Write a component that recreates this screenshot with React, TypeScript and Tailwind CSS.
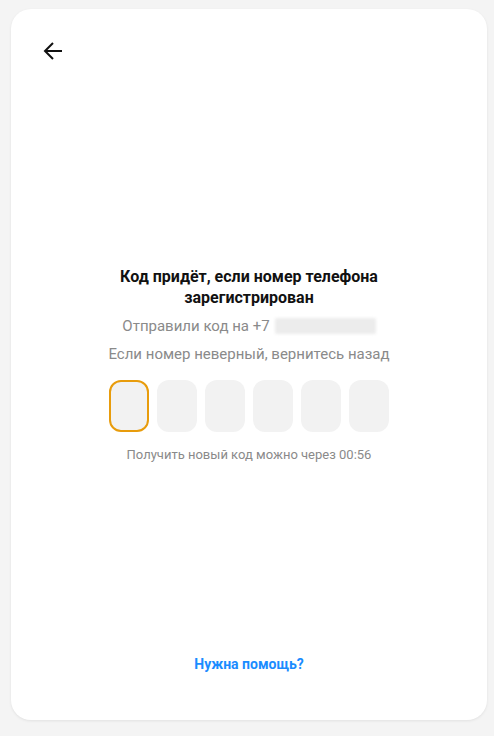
import React from 'react';

export default function App() {
  const cells = [0, 1, 2, 3, 4, 5];

  return (
    <div className="w-[494px] h-[736px] bg-[#f4f4f4] pt-[9px] pl-[11px] font-['Roboto',sans-serif]">
      <div className="w-[476px] h-[711px] bg-white rounded-[20px] shadow-[0_1px_3px_rgba(0,0,0,0.08)] flex flex-col">
        {/* Header */}
        <div className="h-[84px] pt-[31px] pl-[31px]">
          <button className="w-[22px] h-[22px] flex items-center justify-center text-[#111]">
            <svg width="20" height="20" viewBox="0 0 20 20" fill="none">
              <path d="M19 10H2.5M10 2L2 10l8 8" stroke="currentColor" strokeWidth="2" strokeLinecap="butt" strokeLinejoin="miter" />
            </svg>
          </button>
        </div>

        {/* Content */}
        <div className="flex-1 flex flex-col items-center pt-[173px]">
          <h1 className="text-[16px] leading-[21px] font-bold text-[#111] text-center w-[300px]">
            Код придёт, если номер телефона зарегистрирован
          </h1>
          <p className="mt-[8px] text-[15px] leading-[20px] text-[#8a8a8a] flex items-center">
            Отправили код на +7
            <span className="ml-[5px] inline-block w-[101px] h-[16px] bg-[#ececec] rounded-[2px] blur-[1.5px]" />
          </p>
          <p className="mt-[8px] text-[15px] leading-[20px] text-[#8a8a8a]">
            Если номер неверный, вернитесь назад
          </p>
          <div className="mt-[16px] flex gap-[8px]">
            {cells.map((i) => (
              <div
                key={i}
                className={
                  i === 0
                    ? 'w-[40px] h-[52px] rounded-[12px] bg-[#f2f2f2] border-2 border-[#e89c0c]'
                    : 'w-[40px] h-[52px] rounded-[12px] bg-[#f2f2f2]'
                }
              />
            ))}
          </div>
          <p className="mt-[14px] text-[13px] leading-[18px] text-[#8a8a8a]">
            Получить новый код можно через 00:56
          </p>
        </div>

        {/* Footer */}
        <div className="h-[66px] flex justify-center">
          <a className="text-[14px] leading-[20px] font-bold text-[#1a8cff]">Нужна помощь?</a>
        </div>
      </div>
    </div>
  );
}
